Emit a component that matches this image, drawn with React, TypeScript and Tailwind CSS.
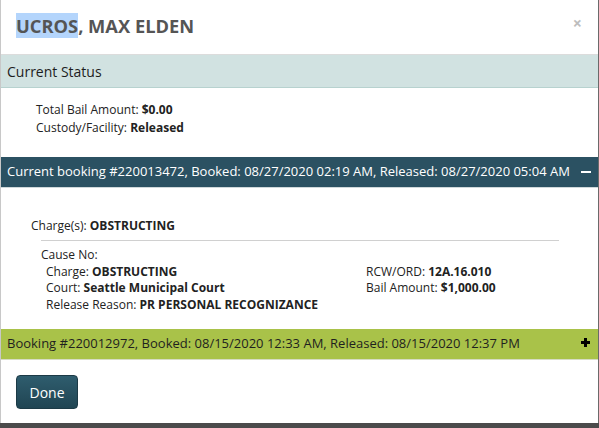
import React from "react";

export default function App() {
  return (
    <div className="w-[599px] h-[428px] bg-[#4b4b4b] overflow-hidden" style={{ fontFamily: '"Open Sans", sans-serif' }}>
      <div className="w-[599px] h-[423px] bg-white border-l border-l-[#c8c8c8] border-r border-r-[#6a6a6a] flex flex-col">
        {/* Header */}
        <div className="h-[54px] flex items-start justify-between pl-[15px] pr-[15px] pt-[13px]">
          <h1 className="text-[18.3px] leading-[26px] font-bold text-[#555555]">
            <span className="bg-[#b4d5fc]">UCROS</span>, MAX ELDEN
          </h1>
          <span className="text-[#bdbdbd] text-[16px] font-bold leading-[20px] mr-[1px]">×</span>
        </div>
        {/* Current Status bar */}
        <div className="h-[34px] bg-[#d1e2e1] border-t border-t-[#dcdcdc] border-b border-b-[#b7d2cf] flex items-center pl-[6px] text-[14px] text-[#1d1d1d]">
          Current Status
        </div>
        <div className="pl-[35px] pt-[13px] pb-[20px] text-[12px] leading-[18px] text-[#222]">
          <div>
            Total Bail Amount: <b>$0.00</b>
          </div>
          <div>
            Custody/Facility: <b>Released</b>
          </div>
        </div>
        {/* Current booking bar */}
        <div className="h-[31px] bg-[#2b5162] flex items-center justify-between pl-[6px] pr-[6px] text-white text-[13px] border-b border-b-[#cfd8da]">
          <span>Current booking #220013472, Booked: 08/27/2020 02:19 AM, Released: 08/27/2020 05:04 AM</span>
          <span className="w-[10px] h-[2px] bg-white mr-[1px] mb-[1px]" />
        </div>
        <div className="pt-[29px] pb-[16px] text-[12px] text-[#222]">
          <div className="pl-[30px] leading-[18px]">
            Charge(s): <b>OBSTRUCTING</b>
          </div>
          <div className="ml-[40px] mr-[39px] mt-[5px] border-t border-t-[#d0d0d0]" />
          <div className="pl-[40px] pt-[6px] leading-[16.5px]">
            <div>Cause No:</div>
            <div className="flex">
              <div className="w-[325px] pl-[5px]">
                <div>
                  Charge: <b>OBSTRUCTING</b>
                </div>
                <div>
                  Court: <b>Seattle Municipal Court</b>
                </div>
                <div>
                  Release Reason: <b>PR PERSONAL RECOGNIZANCE</b>
                </div>
              </div>
              <div>
                <div>
                  RCW/ORD: <b>12A.16.010</b>
                </div>
                <div>
                  Bail Amount: <b>$1,000.00</b>
                </div>
              </div>
            </div>
          </div>
        </div>
        {/* Booking bar */}
        <div className="h-[31px] bg-[#a9c249] flex items-center justify-between pl-[6px] pr-[8px] text-[#1f1f1f] text-[13px] border-b border-b-[#d7dcc4]">
          <span>Booking #220012972, Booked: 08/15/2020 12:33 AM, Released: 08/15/2020 12:37 PM</span>
          <span className="relative w-[9px] h-[9px] mb-[3px]">
            <span className="absolute left-0 top-[3px] w-[9px] h-[3px] bg-black" />
            <span className="absolute left-[3px] top-0 w-[3px] h-[9px] bg-black" />
          </span>
        </div>
        <div className="pl-[15px] pt-[15px]">
          <button className="w-[62px] h-[34px] rounded-[4px] bg-gradient-to-b from-[#2f5d6e] to-[#204553] border border-[#1c3a46] text-white text-[14px]">
            Done
          </button>
        </div>
      </div>
    </div>
  );
}
